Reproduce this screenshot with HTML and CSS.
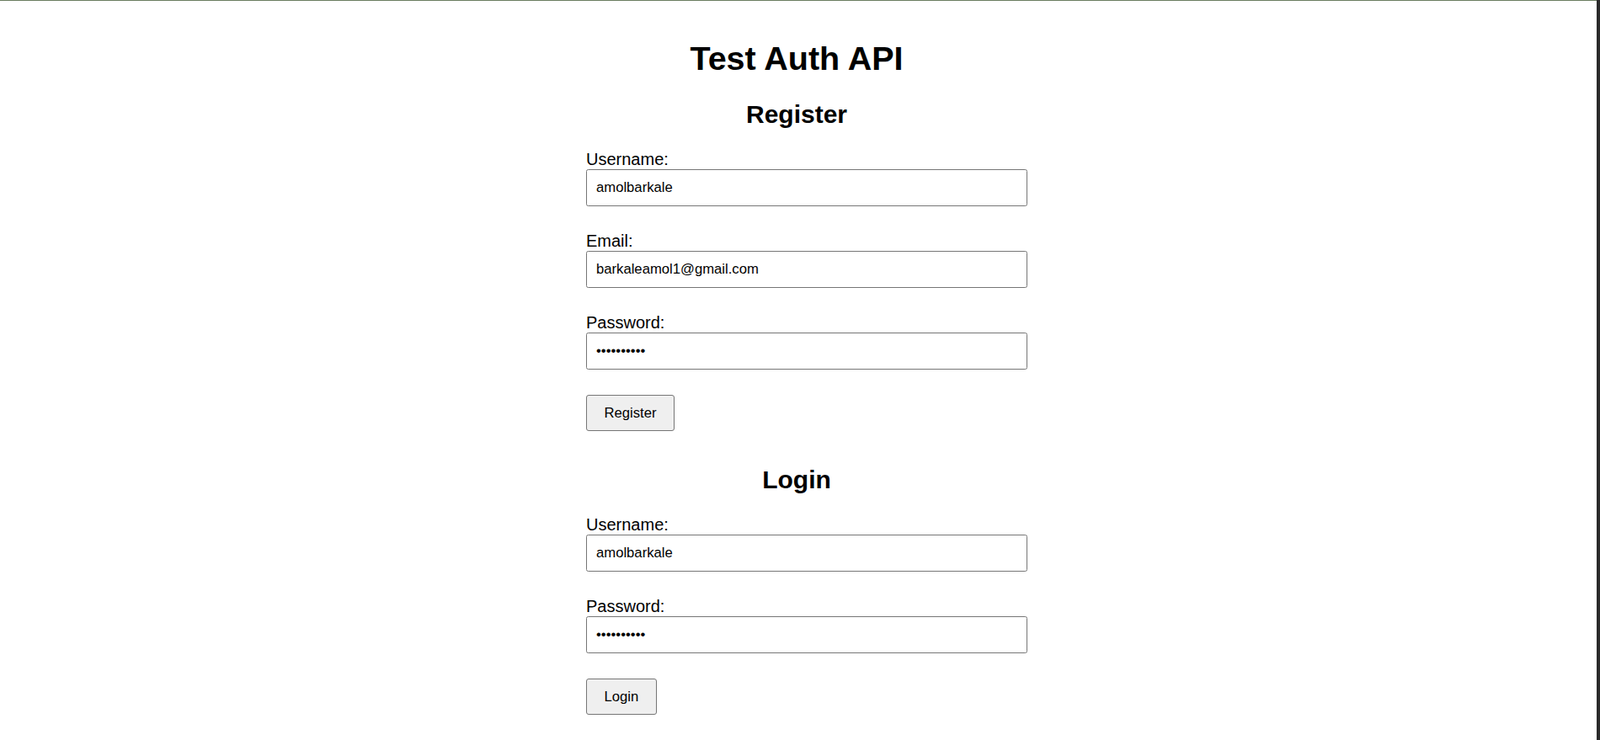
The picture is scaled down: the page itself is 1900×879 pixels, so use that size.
FILE: index.html
```html
<!DOCTYPE html>
<html lang="en">
<head>
<meta charset="utf-8">
<title>Test Auth API</title>
<link rel="stylesheet" href="styles.css">
</head>
<body>
<div class="window">
  <main class="page">
    <div class="container">
      <h1 class="title">Test Auth API</h1>
      <section class="section">
        <h2 class="section-title">Register</h2>
        <form class="form">
          <div class="group">
            <label class="label" for="reg-user">Username:</label>
            <input class="input" id="reg-user" type="text" value="amolbarkale">
          </div>
          <div class="group">
            <label class="label" for="reg-email">Email:</label>
            <input class="input" id="reg-email" type="email" value="barkaleamol1@gmail.com">
          </div>
          <div class="group">
            <label class="label" for="reg-pass">Password:</label>
            <input class="input" id="reg-pass" type="password" value="amolbarkal">
          </div>
          <button class="button" type="button">Register</button>
        </form>
      </section>
      <section class="section">
        <h2 class="section-title">Login</h2>
        <form class="form">
          <div class="group">
            <label class="label" for="log-user">Username:</label>
            <input class="input" id="log-user" type="text" value="amolbarkale">
          </div>
          <div class="group">
            <label class="label" for="log-pass">Password:</label>
            <input class="input" id="log-pass" type="password" value="amolbarkal">
          </div>
          <button class="button" type="button">Login</button>
        </form>
      </section>
    </div>
  </main>
  <div class="scroll-strip"></div>
</div>
</body>
</html>
```

FILE: styles.css
```css
* {
  box-sizing: border-box;
}

html, body {
  margin: 0;
  padding: 0;
  height: 100%;
  overflow: hidden;
  background: #ffffff;
}

body {
  font-family: "Liberation Sans", Arial, sans-serif;
  color: #000000;
}

.window {
  display: flex;
  height: 100%;
}

.page {
  flex: 1;
  border-top: 1px solid #6a7d60;
  padding-right: 4px;
}

.scroll-strip {
  width: 4px;
  background: #2b2b2b;
}

.container {
  width: 500px;
  margin: 0 auto;
}

.title {
  margin: 46px 0 27px;
  font-size: 39.5px;
  line-height: 45px;
  font-weight: bold;
  text-align: center;
}

.section + .section {
  margin-top: 41px;
}

.section-title {
  margin: 0 0 25px;
  font-size: 30px;
  line-height: 34px;
  font-weight: bold;
  text-align: center;
}

.form {
  margin: 0;
}

.group {
  margin-bottom: 30px;
}

.label {
  display: block;
  font-size: 20px;
  line-height: 22px;
  margin-bottom: 1px;
}

.input {
  display: block;
  width: 524px;
  height: 44px;
  margin: 0;
  padding: 0 11px;
  border: 1px solid #767676;
  border-radius: 2.5px;
  font-family: "Liberation Sans", Arial, sans-serif;
  font-size: 16.67px;
  color: #000000;
  background: #ffffff;
  outline: none;
}

.button {
  display: block;
  height: 43px;
  margin: 0;
  padding: 0 20.5px;
  border: 1px solid #767676;
  border-radius: 3px;
  background: #efefef;
  font-family: "Liberation Sans", Arial, sans-serif;
  font-size: 16.67px;
  color: #000000;
}
```
